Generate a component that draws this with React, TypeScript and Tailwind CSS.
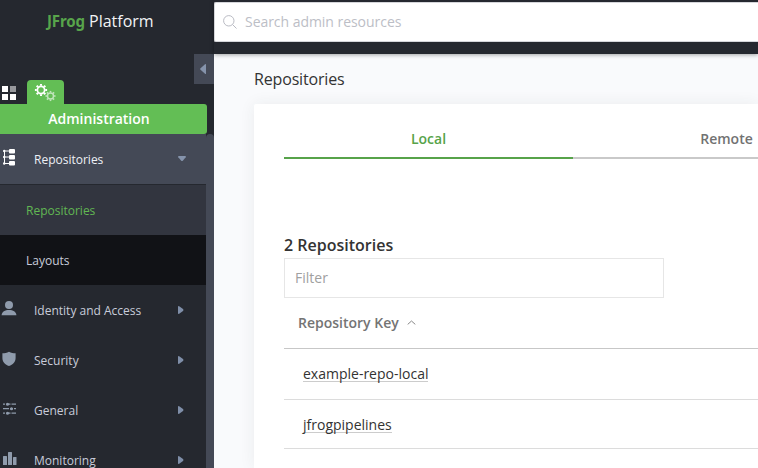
import React from "react";

const ICON = "#8f9bac";

function Gear({ cx, cy, r, opacity }: { cx: number; cy: number; r: number; opacity: number }) {
  return (
    <g transform={`translate(${cx} ${cy}) scale(${r / 6})`} stroke="#fff" fill="none" opacity={opacity}>
      <circle r="3.6" strokeWidth="1.7" />
      {[0, 45, 90, 135, 180, 225, 270, 315].map((a) => (
        <path key={a} d="M0-4.2V-6.1" strokeWidth="2" transform={`rotate(${a})`} />
      ))}
    </g>
  );
}

function RepoIcon() {
  return (
    <svg width="14" height="19" viewBox="0 0 14 19" fill="#fff">
      <path d="M2 3h5M2 9h5M2 15.500h5M2.500 3v12" stroke="#fff" strokeWidth="1" fill="none" />
      <circle cx="2.200" cy="3" r="1.200" />
      <circle cx="2.200" cy="9" r="1.200" />
      <circle cx="2.200" cy="15.500" r="1.200" />
      <rect x="7" y="1" width="6" height="4.500" rx="1" />
      <rect x="7" y="7" width="6" height="4.500" rx="1" />
      <rect x="7" y="13" width="6" height="4.500" rx="1" />
    </svg>
  );
}

function UserIcon() {
  return (
    <svg width="16" height="15" viewBox="0 0 16 15" fill={ICON}>
      <circle cx="8" cy="4" r="4" />
      <path d="M.6 14.3C.8 10.7 4 9 8 9s7.200 1.700 7.400 5.300z" />
    </svg>
  );
}

function ShieldIcon() {
  return (
    <svg width="16" height="15" viewBox="0 -0.500 16 15" fill={ICON}>
      <path d="M8 .2C10 1.300 12.500 1.700 14.600 1.700V6.500c0 4-2.800 6.800-6.600 8-3.800-1.200-6.600-4-6.600-8V1.700C3.500 1.700 6 1.300 8 .2z" />
    </svg>
  );
}

function SlidersIcon() {
  return (
    <svg width="16" height="15" viewBox="0 -0.700 16 15" fill="none" stroke={ICON} strokeWidth="1.300">
      <path d="M2 2.500h2M5.500 2.500h4M10.500 2.500h4.500M2 7h6M9 7h3M13 7h2M2 11.500h2M5.500 11.500h4M10.500 11.500h4.500" />
      <g fill={ICON} stroke="none">
        <circle cx="6.500" cy="2.500" r="1.500" />
        <circle cx="10.500" cy="7" r="1.500" />
        <circle cx="6.500" cy="11.500" r="1.500" />
      </g>
    </svg>
  );
}

function BarsIcon() {
  return (
    <svg width="16" height="15" viewBox="0 -0.500 16 15" fill={ICON}>
      <rect x="2" y="4.500" width="4" height="9" rx=".5" />
      <rect x="7" y="0.500" width="4" height="13" rx=".5" />
      <rect x="12" y="5.500" width="3.500" height="8" rx=".5" />
    </svg>
  );
}

function MenuItem({ icon, label }: { icon: React.ReactNode; label: string }) {
  return (
    <div className="flex h-[50px] shrink-0 items-center pr-[21px]">
      <span className="mb-[3px] ml-px w-[33px]">{icon}</span>
      <span className="flex-1 pt-[2px] text-[12px] text-[#c8ccda]">{label}</span>
      <svg width="8" height="10" viewBox="0 0 8 10" className="mb-px" fill="#7f8ea8">
        <path d="M1 2Q1 .7 2.200 1.300L6 4Q7 5 6 6L2.200 8.700Q1 9.300 1 8z" />
      </svg>
    </div>
  );
}

export default function App() {
  return (
    <div className="flex h-[468px] w-[758px] overflow-hidden bg-[#f9fafc] font-['Open_Sans','Noto_Sans',sans-serif]">
      <aside className="flex w-[214px] shrink-0 flex-col bg-[#25282f]">
        <div className="flex h-[54px] shrink-0 items-start pt-[9px] pl-[47px] text-[16px] leading-6">
          <span className="w-[42px] origin-left scale-x-[0.94] font-['Noto_Sans'] text-[16px] font-bold tracking-[-0.010em] text-[#58a44b]">JFrog</span>
          <span className="text-[#f2f3f5]">Platform</span>
        </div>
        <div className="flex h-[50px] shrink-0 justify-between">
          <div className="flex items-end">
            <svg width="27" height="24" viewBox="0 0 27 24" fill="#fff">
              <path d="M2 6h6v6H2zM2 14h6v6H2zM10 14h6v6h-6z" />
              <path d="M10 6h6v6h-6z" fill="#97989c" />
            </svg>
            <div className="h-6 w-[37px] rounded-t-[4px] bg-[#63be55]">
              <svg width="37" height="24" viewBox="0 0 37 24">
                <Gear cx={14} cy={10} r={6} opacity={1} />
                <Gear cx={23.500} cy={16} r={5} opacity={0.6} />
              </svg>
            </div>
          </div>
          <div className="flex h-[30px] w-5 items-center justify-center bg-[#444956] pr-[2px]">
            <svg width="8" height="12" viewBox="0 0 8 12" fill="#8593ab">
              <path d="M7 1.500v9Q7 11.500 6 10.800L1.500 6.800Q.7 6 1.500 5.200L6 1.200Q7 .5 7 1.500z" />
            </svg>
          </div>
        </div>
        <div className="flex h-[30px] w-[207px] shrink-0 items-center justify-center rounded-r-[3px] bg-[#63be55] pr-[9px] pb-[2px] text-[14px] font-semibold text-white">
          Administration
        </div>
        <div className="flex min-h-0 flex-1">
          <nav className="flex w-[206px] flex-col overflow-hidden">
            <div className="flex h-[51px] shrink-0 items-center border-b border-[#25282f] bg-[#444956] pr-[19px]">
              <span className="mb-[3px] ml-[2px] w-8"><RepoIcon /></span>
              <span className="flex-1 pt-[2px] text-[12px] text-[#eef0f5]">Repositories</span>
              <svg width="10" height="8" viewBox="0 0 10 8" fill="#8593ab">
                <path d="M2 1h6q1.500 0 .7 1.200L6 5.600q-1 1-2 0L1.300 2.200Q.5 1 2 1z" />
              </svg>
            </div>
            <div className="flex h-[50px] shrink-0 items-center bg-[#32353f] pt-[2px] pl-[26px] text-[12px] text-[#61b753]">Repositories</div>
            <div className="flex h-[50px] shrink-0 items-center bg-[#111216] pt-[2px] pl-[26px] text-[12px] text-[#c8ccda]">Layouts</div>
            <MenuItem icon={<UserIcon />} label="Identity and Access" />
            <MenuItem icon={<ShieldIcon />} label="Security" />
            <MenuItem icon={<SlidersIcon />} label="General" />
            <MenuItem icon={<BarsIcon />} label="Monitoring" />
          </nav>
          <div className="w-2 rounded-t-[4px] bg-[#444956]" />
        </div>
      </aside>
      <main className="flex min-w-0 flex-1 flex-col">
        <header className="z-10 h-[54px] shrink-0 bg-[#25282f] pt-[2px] shadow-[0_1px_4px_rgba(0,0,0,0.35)]">
          <div className="flex h-10 items-center rounded-l-[2px] border border-r-0 border-[#d5d6da] bg-white pl-2">
            <svg width="14" height="14" viewBox="0 0 14 14" fill="none" stroke="#b9bbc3" className="mr-2">
              <circle cx="5.800" cy="5.800" r="5.200" />
              <path d="M9.600 9.600L13.500 13.500" />
            </svg>
            <span className="pb-[2px] text-[14px] tracking-[-0.003em] text-[#bcbec6]">Search admin resources</span>
          </div>
        </header>
        <h1 className="h-[50px] shrink-0 pt-[13px] pl-10 text-[16px] leading-6 tracking-[-0.010em] text-[#333]">Repositories</h1>
        <section className="ml-10 flex-1 overflow-hidden rounded-tl-[2px] bg-white pl-[30px] shadow-[0_0_16px_rgba(40,50,60,0.07)]">
          <div className="flex h-[55px] w-[600px] text-center text-[14px] leading-5 font-semibold">
            <div className="w-[289px] shrink-0 border-b-2 border-[#57a34a] pt-[25px] text-[#57a34a]">Local</div>
            <div className="w-[307px] shrink-0 border-b-2 border-[#c9c9c9] pt-[25px] text-[#727272]">Remote</div>
          </div>
          <h2 className="mt-[74px] h-[25px] text-[16px] leading-6 font-semibold text-[#333]">2 Repositories</h2>
          <div className="flex h-10 w-[380px] items-center border border-[#e6e6e6] pb-[2px] pl-[10px] text-[14px] text-[#a0a0a0]">Filter</div>
          <div className="flex h-[51px] items-center border-b border-[#c7c7c7] pb-[2px] pl-[14px] text-[14px] font-semibold text-[#747474]">
            Repository Key
            <svg width="9" height="5" viewBox="0 0 9 5" fill="none" stroke="#888" className="mt-px ml-2">
              <path d="M.7 4.400L4.500 1L8.300 4.400" />
            </svg>
          </div>
          <div className="flex h-[51px] items-center border-b border-[#dcdcdc] pb-[2px] pl-[19px] text-[14px] text-[#333]">
            <span className="h-[17px] border-b border-[#ccc] leading-[17px]">example-repo-local</span>
          </div>
          <div className="flex h-[49px] items-center border-b border-[#dcdcdc] pl-[19px] text-[14px] text-[#333]">
            <span className="h-[17px] border-b border-[#ccc] leading-[17px]">jfrogpipelines</span>
          </div>
        </section>
      </main>
    </div>
  );
}
